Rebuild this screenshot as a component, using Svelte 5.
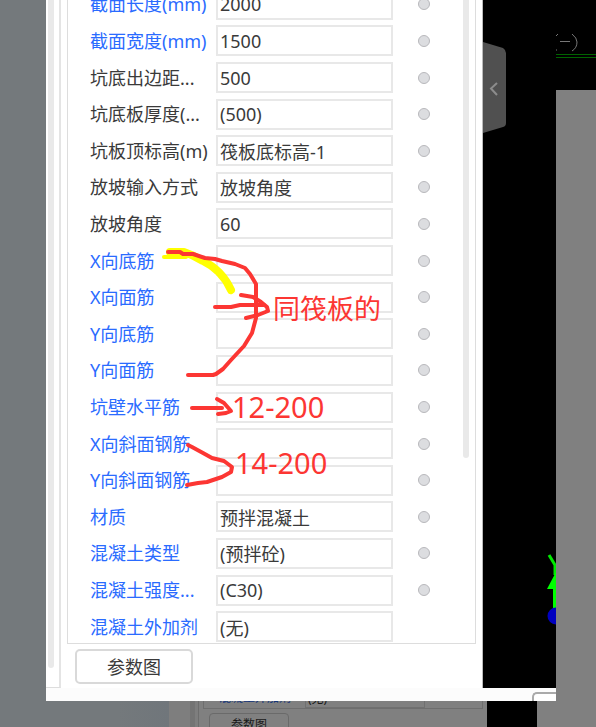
<script>
	const dimmed = { label: '混凝土外加剂', value: '(无)' };

	let rows = $state([
		{ label: '截面长度(mm)', value: '2000', blue: true },
		{ label: '截面宽度(mm)', value: '1500', blue: true },
		{ label: '坑底出边距...', value: '500' },
		{ label: '坑底板厚度(...', value: '(500)' },
		{ label: '坑板顶标高(m)', value: '筏板底标高-1' },
		{ label: '放坡输入方式', value: '放坡角度' },
		{ label: '放坡角度', value: '60' },
		{ label: 'X向底筋', value: '', blue: true },
		{ label: 'X向面筋', value: '', blue: true },
		{ label: 'Y向底筋', value: '', blue: true },
		{ label: 'Y向面筋', value: '', blue: true },
		{ label: '坑壁水平筋', value: '', blue: true },
		{ label: 'X向斜面钢筋', value: '', blue: true },
		{ label: 'Y向斜面钢筋', value: '', blue: true },
		{ label: '材质', value: '预拌混凝土', blue: true },
		{ label: '混凝土类型', value: '(预拌砼)', blue: true },
		{ label: '混凝土强度...', value: '(C30)', blue: true },
		{ label: '混凝土外加剂', value: '(无)', blue: true, noMark: true }
	]);
</script>

<main class="page">
	<div class="upper">
		<div class="gutter"></div>
		<section class="dialog">
			<div class="body">
				<div class="strip"><div class="thumb"></div></div>
				<div class="side">
					<form class="props">
						<div class="rows">
							{#each rows as row, i}
								<div class="row">
									<label for="prop-{i}" class:blue={row.blue}>{row.label}</label>
									<input id="prop-{i}" type="text" bind:value={row.value} />
									<span class="mark">
										{#if !row.noMark}
											<input type="checkbox" aria-label={row.label} />
										{/if}
									</span>
								</div>
							{/each}
						</div>
						<div class="scroll"><div class="thumb"></div></div>
					</form>
					<button class="param" type="button">参数图</button>
				</div>
				<div class="canvas">
					<button class="collapse" type="button" aria-label="收起">
						<svg width="24" height="92" viewBox="0 0 24 92">
							<path d="M0 0 L20 6 Q23 8 23 11 V81 Q23 84 20 85 L0 91 Z" fill="#505050" />
							<path d="M14 41 L8 46.500 L14 53" fill="none" stroke="#8c8c8c" stroke-width="2" />
						</svg>
					</button>
					<svg class="axis" width="10" height="74" viewBox="0 0 10 74">
						<path d="M3 2 L9 12 V22" fill="none" stroke="#00e800" stroke-width="3" />
						<path d="M10 19 L1 36 H7 V56 H10 Z" fill="#00ff00" />
						<circle cx="10" cy="63" r="8.500" fill="#0000c0" />
					</svg>
				</div>
			</div>
			<div class="foot"><div class="stub"></div></div>
		</section>
		<div class="right">
			<svg class="grid-lines" width="40" height="90" viewBox="0 0 40 90">
				<path d="M2 34 L0 36 M0 50 H1 M16 34 Q21 38 21 42 Q21 48 16 51" fill="none" stroke="#777" />
				<path d="M4 41.500 H14" stroke="#777" />
				<path d="M0 54.500 H40 M0 57.500 H40" stroke="#006400" />
			</svg>
		</div>
	</div>

	<div class="lower">
		<div class="back"></div>
		<div class="back-strip"><div class="thumb"></div></div>
		<div class="back-side">
			<div class="back-props">
				<span class="name">{dimmed.label}</span>
				<span class="val">{dimmed.value}</span>
			</div>
			<button class="back-param" type="button">参数图</button>
		</div>
		<div class="back-canvas"></div>
		<div class="back-end"></div>
	</div>

	<svg class="notes" width="596" height="727" viewBox="0 0 596 727">
		<g fill="none" stroke="#ffff00" stroke-linecap="round" stroke-linejoin="round">
			<path d="M164 257 H186" stroke-width="4" />
			<path d="M170 252 H184 Q193 255 203 261 Q222 270 231 290" stroke-width="8" />
		</g>
		<g fill="none" stroke="#fc3633" stroke-width="4" stroke-linecap="round" stroke-linejoin="round">
			<path d="M168 252 H180 L183 254 H193 L205 258 L215 259 L222 261 L235 264 L245 268 L250 274 L256 284 V318 L252 333 L244 346 L231 360 L223 369 L216 374 L213 375 H188" />
			<path d="M215 307 H231 L240 305 H264" />
			<path d="M241 295 L253 297 L261 302 L267 307 L268 311 L258 315 L246 318" />
			<path d="M192 408 H222" />
			<path d="M217 399 L224 403 L231 411 L226 413 L218 414" />
			<path d="M188 445 L192 447 L203 453 L212 458 L224 461 L232 467 L231 472 L222 477 L207 482 L198 483 L187 485" />
		</g>
		<g class="note-text">
			<text class="cjk" x="273" y="319">同筏板的</text>
			<text x="232" y="418">12-200</text>
			<text x="235" y="474">14-200</text>
		</g>
	</svg>
</main>

<style>
	:global(body) {
		margin: 0;
	}
	.page {
		position: relative;
		min-height: 100vh;
		display: flex;
		flex-direction: column;
		overflow: hidden;
		background: #808080;
		font-family: 'Noto Sans', 'Noto Sans CJK SC', sans-serif;
		font-size: 18px;
		color: #3a3a3a;
	}
	input,
	button {
		font: inherit;
		color: inherit;
		margin: 0;
	}
	.upper {
		display: flex;
	}
	.gutter {
		width: 46px;
		background: #74797c;
	}
	.dialog {
		flex: 1;
		min-width: 0;
		background: #fcfcfc;
	}
	.body {
		display: flex;
		height: 688px;
		overflow: hidden;
	}
	.strip {
		box-sizing: border-box;
		width: 15px;
		padding: 0 5px 19px 2px;
		background: #fff;
		border-right: 2px solid #e4e4e4;
		border-bottom: 1px solid #ddd;
		display: flex;
	}
	.thumb {
		flex: 1;
		background: #e9e9e9;
		border-radius: 0 0 3px 3px;
	}
	.side {
		flex: 1;
		min-width: 0;
		padding: 0 6px;
		background: #fff;
		border-right: 1px solid #bbb;
	}
	.props {
		display: flex;
		border: 1px solid #ddd;
		border-top: 0;
		padding: 0 6px 0 22px;
		height: 643px;
	}
	.rows {
		flex: 1;
		min-width: 0;
		height: 659px;
		margin-top: -14px;
		display: flex;
		flex-direction: column;
	}
	.row {
		flex: 1;
		display: flex;
		align-items: center;
	}
	label {
		width: 126px;
		white-space: nowrap;
		line-height: 24px;
	}
	.blue {
		color: #2a6bff;
	}
	input[type='text'] {
		box-sizing: border-box;
		flex: 1;
		min-width: 0;
		height: 31px;
		padding: 0 2px;
		border: 2px solid #e8e8e8;
		background: #fff;
		outline: 0;
	}
	.mark {
		width: 70px;
		display: flex;
		box-sizing: border-box;
		padding-left: 25px;
	}
	input[type='checkbox'] {
		appearance: none;
		box-sizing: border-box;
		width: 12px;
		height: 12px;
		border: 1px solid #b8b8bc;
		border-radius: 50%;
		background: #dcdde0;
	}
	.scroll {
		width: 6px;
		height: 458px;
		display: flex;
	}
	.param {
		display: block;
		width: 118px;
		height: 35px;
		margin: 5px 0 0 8px;
		padding: 0;
		border: 2px solid #d9d9d9;
		border-radius: 5px;
		background: #fff;
		line-height: 24px;
	}
	.canvas {
		width: 73px;
		box-sizing: border-box;
		padding: 42px 0 61px;
		display: flex;
		flex-direction: column;
		justify-content: space-between;
		background: #000;
	}
	.collapse {
		width: 24px;
		padding: 0;
		border: 0;
		background: none;
	}
	.collapse svg,
	.axis {
		display: block;
	}
	.axis {
		align-self: flex-end;
	}
	.foot {
		height: 13px;
		display: flex;
		justify-content: flex-end;
		align-items: flex-end;
	}
	.stub {
		width: 22px;
		height: 7px;
		border: 2px solid #aaa;
		border-width: 2px 0 0 2px;
		border-radius: 5px 0 0 0;
		background: #fff;
	}
	.right {
		width: 40px;
		background: #808080;
	}
	.grid-lines {
		display: block;
		background: #000;
	}
	.lower {
		flex: 1;
		height: 26px;
		display: flex;
		overflow: hidden;
	}
	.back {
		width: 169px;
		background: linear-gradient(90deg, #74797c 70%, #70767b);
	}
	.back-strip {
		box-sizing: border-box;
		width: 30px;
		padding-left: 21px;
		padding-right: 3px;
		display: flex;
		background: #7e7e7e;
		border-right: 1px solid #6d6d6d;
	}
	.back-strip .thumb {
		background: #747474;
	}
	.back-side {
		flex: 1;
		min-width: 0;
		padding: 0 4px;
		font-size: 12px;
		color: #191919;
	}
	.back-props {
		display: flex;
		height: 7px;
		overflow: hidden;
		border: 1px solid #6e6e6e;
		border-top: 0;
		padding-left: 15px;
		line-height: 16px;
	}
	.back-props span {
		margin-top: -11px;
	}
	.name {
		width: 86px;
		color: #12347a;
	}
	.val {
		width: 116px;
		padding-left: 2px;
		border: 1px solid #707070;
	}
	.back-param {
		width: 80px;
		height: 24px;
		margin: 4px 0 0 6px;
		padding: 0;
		border: 1px solid #6a6a6a;
		border-radius: 4px;
		background: #808080;
		line-height: 16px;
	}
	.back-canvas {
		width: 50px;
		background: #000;
	}
	.back-end {
		width: 59px;
	}
	.notes {
		position: absolute;
		top: 0;
		left: 0;
		pointer-events: none;
	}
	.note-text {
		fill: #fc3633;
		font-size: 29px;
	}
	.cjk {
		font-size: 27px;
	}
</style>
